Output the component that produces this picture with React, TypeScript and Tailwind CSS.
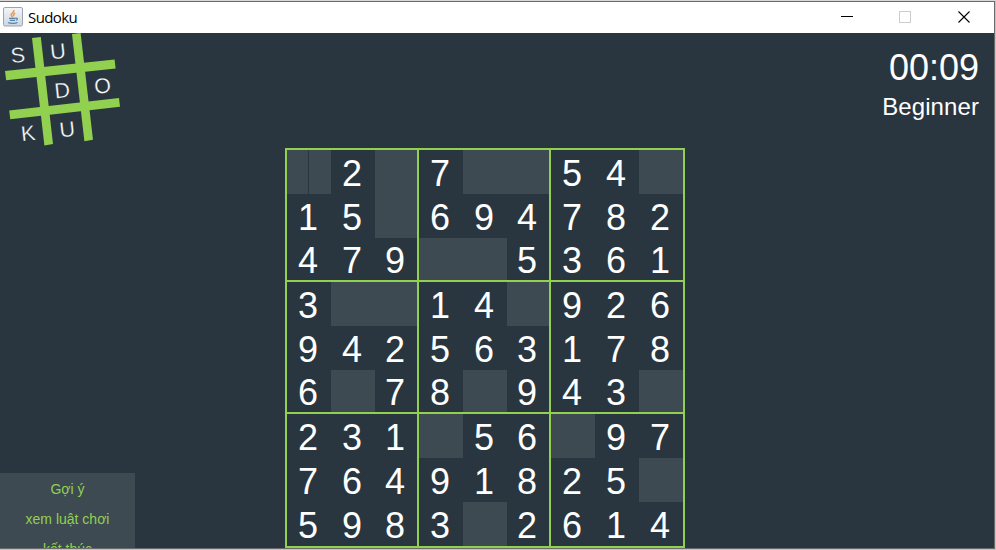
const rows = [
  ' 2 7  54 ',
  '15 694782',
  '479  5361',
  '3  14 926',
  '942563178',
  '6 78 943 ',
  '231 56 97',
  '76491825 ',
  '5983 2614',
];

const bars = [
  '5,71 114.6,59.6 115.6,68.4 6.2,80.2',
  '9.2,110.4 119,98 120,106.7 10.3,119.2',
  '32,38 40.8,37 53,144 44.4,145.4',
  '72,34 80.6,33 93,139.8 84.4,141.2',
];

const letters: [string, number, number][] = [
  ['S', 17.8, 55],
  ['U', 58, 51.3],
  ['D', 62.3, 90.3],
  ['O', 102.5, 85.6],
  ['K', 28.2, 133],
  ['U', 67.3, 129.3],
];

function JavaIcon() {
  return (
    <svg className="-mt-[2px]" width="20" height="20" viewBox="0 0 20 20" fill="none">
      <defs>
        <linearGradient id="face" x1="0" y1="0" x2="0" y2="1">
          <stop offset="0" stopColor="#f4f6f8" />
          <stop offset="1" stopColor="#ccd6e1" />
        </linearGradient>
      </defs>
      <rect x=".5" y=".5" width="19" height="18.5" rx="1.5" fill="url(#face)" stroke="#9aa5b1" />
      <path d="M10.8 3c1 2.2-3 3-2.7 5 .1 1 1.4 1.600 1.500 2.600M12.200 6c-2.400 1-2 2-1.500 3.200" stroke="#ee9650" strokeWidth="1.400" />
      <path d="M6 11.400h6.500M6.800 13.400h5.200M12.600 11.200c2.500-.5 2.200 1.800.2 2M5 15.500c2 1.200 7.500 1.200 9.500 0" stroke="#5884ac" strokeWidth="1.200" />
    </svg>
  );
}

function TitleBar() {
  return (
    <header className="flex h-[31px] shrink-0 items-center bg-white pl-[3px]">
      <JavaIcon />
      <span className="-mt-px ml-[5px] font-['Open_Sans',sans-serif] text-[15px] tracking-[-0.6px] text-black">Sudoku</span>
      <svg className="ml-auto" width="154" height="31" viewBox="840 2 154 31" fill="none" shapeRendering="crispEdges">
        <path d="M841 16.500h12" stroke="#000" />
        <rect x="899.500" y="11.500" width="11" height="11" stroke="#ccc" />
        <path d="M958.500 11.500l11 11M969.500 11.500l-11 11" stroke="#000" shapeRendering="auto" strokeWidth="1.100" />
      </svg>
    </header>
  );
}

function Logo() {
  return (
    <svg className="block" width="125" height="115" viewBox="0 33 125 115">
      {bars.map((p) => (
        <polygon key={p} points={p} fill="#92d050" />
      ))}
      {letters.map(([c, x, y]) => (
        <text
          key={c + x}
          x={x}
          y={y}
          dy="7.500"
          textAnchor="middle"
          fill="#fff"
          stroke="#29363f"
          strokeWidth="0.300"
          transform={`rotate(-6 ${x} ${y})`}
          className="font-['Liberation_Sans',sans-serif] text-[21.5px]"
        >
          {c}
        </text>
      ))}
    </svg>
  );
}

function Board() {
  return (
    <div className="grid h-[400px] w-[400px] grid-cols-[130px_130px_132px] grid-rows-[130px_130px_132px] gap-[2px] border-2 border-[#92d050] bg-[#92d050]">
      {[0, 1, 2].map((br) =>
        [0, 1, 2].map((bc) => (
          <div key={`${br}${bc}`} className="grid grid-cols-[44px_44px_1fr] grid-rows-[44px_44px_1fr] bg-[#29363f]">
            {[0, 1, 2].map((r) =>
              [0, 1, 2].map((c) => {
                const v = rows[br * 3 + r][bc * 3 + c];
                const caret = br + bc + r + c === 0;
                return (
                  <div
                    key={`${r}${c}`}
                    className={`flex items-center justify-center overflow-hidden pr-[2px] pt-[3px] text-[36px] leading-[39px] ${v === ' ' ? 'bg-[#3e4a52]' : ''}`}
                  >
                    {caret ? <span className="-mt-[3px] h-[44px] w-px bg-[#29363f]" /> : v}
                  </div>
                );
              }),
            )}
          </div>
        )),
      )}
    </div>
  );
}

export default function App() {
  return (
    <div className="flex h-[550px] w-[996px] flex-col overflow-hidden border-t border-[#d8d8d8] bg-[#c4c2c2] font-['Liberation_Sans',Arial,sans-serif]">
      <div className="flex h-[548px] w-[995px] flex-col border-b border-r border-t border-[#6b6b6b]">
        <TitleBar />
        <main className="flex min-h-0 flex-1 justify-between overflow-hidden bg-[#29363f] text-white">
          <aside className="flex w-[285px] flex-col justify-between">
            <Logo />
            <nav className="h-[75px] w-[135px] shrink-0 overflow-hidden bg-[#3e4a52] pt-px text-center text-[14px] leading-[30px] text-[#92d050]">
              <div>Gợi ý</div>
              <div>xem luật chơi</div>
              <div>kết thúc</div>
            </nav>
          </aside>
          <div className="pt-[115px]">
            <Board />
          </div>
          <section className="w-[309px] pr-[15px] pt-[14px] text-right">
            <div className="text-[36px] leading-[41px]">00:09</div>
            <div className="mt-[5px] text-[24px] leading-[28px] tracking-[0.1px]">Beginner</div>
          </section>
        </main>
      </div>
    </div>
  );
}
